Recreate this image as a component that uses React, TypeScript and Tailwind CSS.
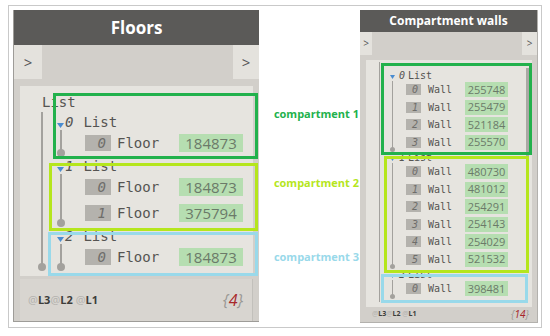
import React from "react";

const MONO = "font-['DejaVu_Sans_Mono',monospace]";
const SANS = "font-['Open_Sans','Noto_Sans',sans-serif]";

function Tri({ w = 7, h = 5 }: { w?: number; h?: number }) {
  return (
    <svg width={w} height={h} viewBox={`0 0 ${w} ${h}`} className="shrink-0">
      <path d={`M0 0 L${w} 0 L${w / 2} ${h} Z`} fill="#4a8cd0" />
    </svg>
  );
}

function FloorRow({ idx, val }: { idx: string; val: string }) {
  return (
    <div className="h-[26px] flex items-center">
      <div className={`ml-[23px] w-[26px] h-[16px] bg-[#b4b2ad] flex items-center justify-end pr-[5px] ${MONO} italic text-[14px] text-[#6e6d6a]`}>
        {idx}
      </div>
      <div className={`ml-[6px] w-[62px] ${MONO} text-[14px] text-[#555452]`}>Floor</div>
      <div className={`w-[64px] h-[18px] bg-[#b6deb1] flex items-center justify-center ${SANS} text-[15px] text-[#6b7a69]`}>
        {val}
      </div>
    </div>
  );
}

function FloorList({ idx, rows }: { idx: string; rows: string[][] }) {
  return (
    <div className="flex flex-col">
      <div className="h-[18px] flex items-center pt-[3px]">
        <div className="ml-[14px] mt-[5px]"><Tri /></div>
        <span className={`ml-[1px] ${MONO} italic text-[14px] text-[#555452]`}>{idx}</span>
        <span className={`ml-[10px] ${MONO} text-[14px] text-[#555452]`}>List</span>
      </div>
      <div className="relative ml-[17px] border-l-2 border-[#a3a19d]">
        {rows.map((r, i) => (
          <FloorRow key={i} idx={r[0]} val={r[1]} />
        ))}
        <div className="absolute -left-[5px] -bottom-[1px] w-[8px] h-[8px] rounded-full bg-[#a3a19d]" />
      </div>
    </div>
  );
}

function WallRow({ idx, val }: { idx: string; val: string }) {
  return (
    <div className="h-[17.5px] flex items-center">
      <div className={`ml-[13px] w-[15px] h-[11px] bg-[#b4b2ad] flex items-center justify-end pr-[3px] ${MONO} italic text-[10px] text-[#6e6d6a]`}>
        {idx}
      </div>
      <div className={`ml-[7px] w-[37px] ${MONO} text-[10px] text-[#555452]`}>Wall</div>
      <div className={`w-[43px] h-[15px] bg-[#b6deb1] flex items-center justify-center ${SANS} text-[11px] text-[#6b7a69]`}>
        {val}
      </div>
    </div>
  );
}

function WallList({ idx, rows }: { idx: string; rows: string[][] }) {
  return (
    <div className="flex flex-col">
      <div className="h-[12px] flex items-center">
        <div className="ml-[10px] mt-[3px]"><Tri w={5} h={4} /></div>
        <span className={`ml-[4px] ${MONO} italic text-[10px] text-[#555452]`}>{idx}</span>
        <span className={`ml-[3px] ${MONO} text-[10px] text-[#555452]`}>List</span>
      </div>
      <div className="relative ml-[12px] border-l border-[#a3a19d]">
        {rows.map((r, i) => (
          <WallRow key={i} idx={r[0]} val={r[1]} />
        ))}
        <div className="absolute -left-[3px] -bottom-[1px] w-[5px] h-[5px] rounded-full bg-[#a3a19d]" />
      </div>
    </div>
  );
}

function Levels({ size }: { size: string }) {
  return (
    <span className={`${SANS} ${size} font-bold text-[#3d3d3b]`}>
      <span className="font-normal text-[#b3b1ad]">@</span>L3
      <span className="font-normal text-[#b3b1ad]">@</span>L2{" "}
      <span className="font-normal text-[#b3b1ad]">@</span>L1
    </span>
  );
}

export default function App() {
  return (
    <div className="relative w-[550px] h-[336px] bg-white overflow-hidden">
      <div className="ml-[8px] mt-[5px] w-[534px] h-[323px] border border-[#c9c9c9] pl-[4px] pt-[4px] flex">
        {/* Floors node */}
        <div className="w-[246px] h-[312px] flex flex-col border-l border-b border-[#9e9c98]">
          <div className={`h-[35px] bg-[#5b5a58] flex items-center justify-center ${SANS} font-bold text-[17px] text-white`}>
            Floors
          </div>
          <div className="h-[35px] bg-[#d2cfca] flex justify-between">
            <div className={`w-[28px] bg-[#e4e2dd] flex items-center justify-center ${SANS} text-[15px] text-[#555]`}>&gt;</div>
            <div className={`w-[26px] bg-[#e4e2dd] flex items-center justify-center ${SANS} text-[15px] text-[#555]`}>&gt;</div>
          </div>
          <div className="flex-1 bg-[#d2cfca] pl-[6px] pr-[6px] pt-[7px] flex flex-col">
            <div className="h-[190px] bg-[#e6e4df] pt-[6px] flex flex-col">
              <div className={`h-[20px] flex items-center pl-[22px] pt-[1px] ${MONO} text-[14px] text-[#555452]`}>List</div>
              <div className="relative ml-[21px] border-l-2 border-[#a3a19d] h-[158px]">
                <FloorList idx="0" rows={[["0", "184873"]]} />
                <FloorList idx="1" rows={[["0", "184873"], ["1", "375794"]]} />
                <FloorList idx="2" rows={[["0", "184873"]]} />
                <div className="absolute -left-[5px] -bottom-[1px] w-[8px] h-[8px] rounded-full bg-[#a3a19d]" />
              </div>
            </div>
            <div className="mt-[3px] h-[42px] bg-[#d8d5d0] border-r border-[#c2c0bb] flex items-center justify-between pl-[8px] pr-[9px]">
              <Levels size="text-[11px]" />
              <span className={`${SANS} italic text-[16px] text-[#9a9894]`}>
                {"{"}<span className="text-[#a8262a]">4</span>{"}"}
              </span>
            </div>
          </div>
        </div>

        {/* Gap with annotations */}
        <div className={`w-[101px] flex flex-col items-end pr-[1px] ${SANS} font-bold text-[11px]`}>
          <div className="mt-[96px] text-[#22b14c]">compartment 1</div>
          <div className="mt-[52px] text-[#b5e61d]">compartment 2</div>
          <div className="mt-[58px] text-[#99d9ea]">compartment 3</div>
        </div>

        {/* Compartment walls node */}
        <div className="w-[178px] h-[313px] flex flex-col border-r border-b border-[#b3b1ad]">
          <div className={`h-[22px] bg-[#5b5a58] flex items-center justify-center ${SANS} font-bold text-[12px] text-white`}>
            Compartment walls
          </div>
          <div className="h-[23px] bg-[#d2cfca] flex justify-between">
            <div className={`w-[12px] bg-[#e4e2dd] flex items-center justify-center ${SANS} text-[10px] text-[#555]`}>&gt;</div>
            <div className={`w-[15px] bg-[#e4e2dd] flex items-center justify-center ${SANS} text-[10px] text-[#555]`}>&gt;</div>
          </div>
          <div className="flex-1 bg-[#d2cfca] pl-[6px] pr-[5px] pt-[5px] flex flex-col">
            <div className="relative h-[247px] bg-[#e6e4df] pt-[9px] flex flex-col">
              <div className="relative ml-[13px] border-l border-[#a3a19d] -mt-[7px] pt-[7px] h-[240px]">
                <WallList idx="0" rows={[["0", "255748"], ["1", "255479"], ["2", "521184"], ["3", "255570"]]} />
                <WallList idx="1" rows={[["0", "480730"], ["1", "481012"], ["2", "254291"], ["3", "254143"], ["4", "254029"], ["5", "521532"]]} />
                <WallList idx="2" rows={[["0", "398481"]]} />
              </div>
              <div className="absolute right-[3px] top-[8px] w-[3px] h-[192px] bg-[#aaa8a4]" />
            </div>
            <div className="h-[15px] flex items-center justify-between pl-[6px] pr-[3px]">
              <Levels size="text-[7px]" />
              <span className={`${SANS} italic text-[10px] text-[#9a9894]`}>
                {"{"}<span className="text-[#a8262a]">14</span>{"}"}
              </span>
            </div>
          </div>
        </div>
      </div>

      {/* Highlight overlays */}
      <div className="absolute left-[53px] top-[93px] w-[205px] h-[66px] border-[3px] border-[#22b14c]" />
      <div className="absolute left-[49px] top-[163px] w-[209px] h-[68px] border-[3px] border-[#b5e61d]" />
      <div className="absolute left-[48px] top-[232px] w-[210px] h-[44px] border-[3px] border-[#99d9ea]" />
      <div className="absolute left-[381px] top-[63px] w-[151px] h-[92px] border-[3px] border-[#22b14c]" />
      <div className="absolute left-[384px] top-[156px] w-[145px] h-[117px] border-[3px] border-[#b5e61d]" />
      <div className="absolute left-[381px] top-[274px] w-[147px] h-[29px] border-[3px] border-[#99d9ea]" />
    </div>
  );
}
